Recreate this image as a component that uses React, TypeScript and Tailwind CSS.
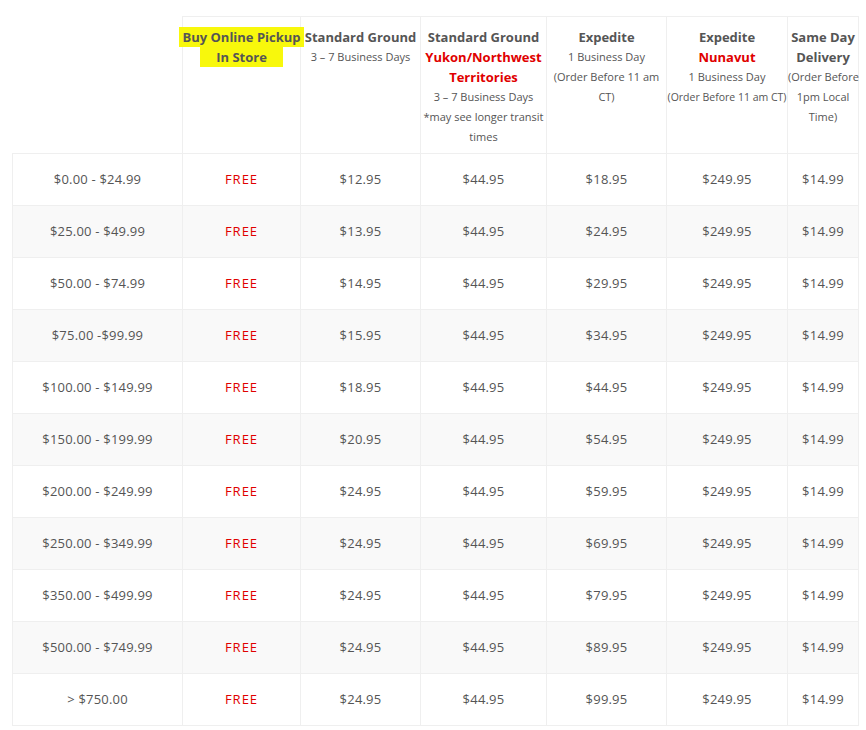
import React from "react";

const rows: [string, string, string][] = [
  ["$0.00 - $24.99", "$12.95", "$18.95"],
  ["$25.00 - $49.99", "$13.95", "$24.95"],
  ["$50.00 - $74.99", "$14.95", "$29.95"],
  ["$75.00 -$99.99", "$15.95", "$34.95"],
  ["$100.00 - $149.99", "$18.95", "$44.95"],
  ["$150.00 - $199.99", "$20.95", "$54.95"],
  ["$200.00 - $249.99", "$24.95", "$59.95"],
  ["$250.00 - $349.99", "$24.95", "$69.95"],
  ["$350.00 - $499.99", "$24.95", "$79.95"],
  ["$500.00 - $749.99", "$24.95", "$89.95"],
  ["> $750.00", "$24.95", "$99.95"],
];

const th = "border border-[#efefef] align-top text-center pt-[10px] px-0 font-normal";
const title = "block text-[13px] font-bold leading-[20px] text-[#555]";
const sub = "block text-[11px] font-normal leading-[20px] text-[#555]";
const red = "block text-[13px] font-bold leading-[20px] text-[#e00000]";
const td = "border border-[#efefef] text-center align-middle text-[13px] text-[#555] tracking-[0.2px]";

export default function App() {
  return (
    <div
      className="w-[866px] h-[730px] bg-white pl-[12px] pt-[16px]"
      style={{ fontFamily: '"Open Sans", "Liberation Sans", sans-serif' }}
    >
      <table className="table-fixed border-collapse w-[846px]">
        <colgroup>
          <col className="w-[170px]" />
          <col className="w-[118px]" />
          <col className="w-[120px]" />
          <col className="w-[126px]" />
          <col className="w-[120px]" />
          <col className="w-[121px]" />
          <col className="w-[71px]" />
        </colgroup>
        <thead>
          <tr className="h-[137px]">
            <th className="p-0"></th>
            <th className={th + " overflow-visible"}>
              <span className="block text-[13px] font-bold leading-[20px] text-[#555] whitespace-nowrap">
                <span className="bg-[#f8f80c] inline-block px-[3px] -mx-[6px]">Buy Online Pickup</span>
              </span>
              <span className="block text-[13px] font-bold leading-[20px] text-[#555]">
                <span className="bg-[#f8f80c] inline-block px-[16px]">In Store</span>
              </span>
            </th>
            <th className={th}>
              <span className={title + " whitespace-nowrap"}>Standard Ground</span>
              <span className={sub}>3 – 7 Business Days</span>
            </th>
            <th className={th}>
              <span className={title}>Standard Ground</span>
              <span className={red}>Yukon/Northwest Territories</span>
              <span className={sub}>3 – 7 Business Days</span>
              <span className={sub}>*may see longer transit times</span>
            </th>
            <th className={th}>
              <span className={title}>Expedite</span>
              <span className={sub}>1 Business Day</span>
              <span className={sub}>(Order Before 11 am CT)</span>
            </th>
            <th className={th}>
              <span className={title}>Expedite</span>
              <span className={red}>Nunavut</span>
              <span className={sub}>1 Business Day</span>
              <span className="block text-[10.5px] font-normal leading-[20px] text-[#555] whitespace-nowrap">
                (Order Before 11 am CT)
              </span>
            </th>
            <th className={th}>
              <span className={title}>Same Day Delivery</span>
              <span className={sub + " whitespace-nowrap"}>(Order Before</span>
              <span className={sub + " whitespace-nowrap"}>1pm Local</span>
              <span className={sub + " whitespace-nowrap"}>Time)</span>
            </th>
          </tr>
        </thead>
        <tbody>
          {rows.map((r, i) => (
            <tr key={i} className={"h-[52px] " + (i % 2 === 1 ? "bg-[#f9f9f9]" : "bg-white")}>
              <td className={td}>{r[0]}</td>
              <td className={td + " text-[#e00000] tracking-[1px]"}>FREE</td>
              <td className={td}>{r[1]}</td>
              <td className={td}>$44.95</td>
              <td className={td}>{r[2]}</td>
              <td className={td}>$249.95</td>
              <td className={td}>$14.99</td>
            </tr>
          ))}
        </tbody>
      </table>
    </div>
  );
}
